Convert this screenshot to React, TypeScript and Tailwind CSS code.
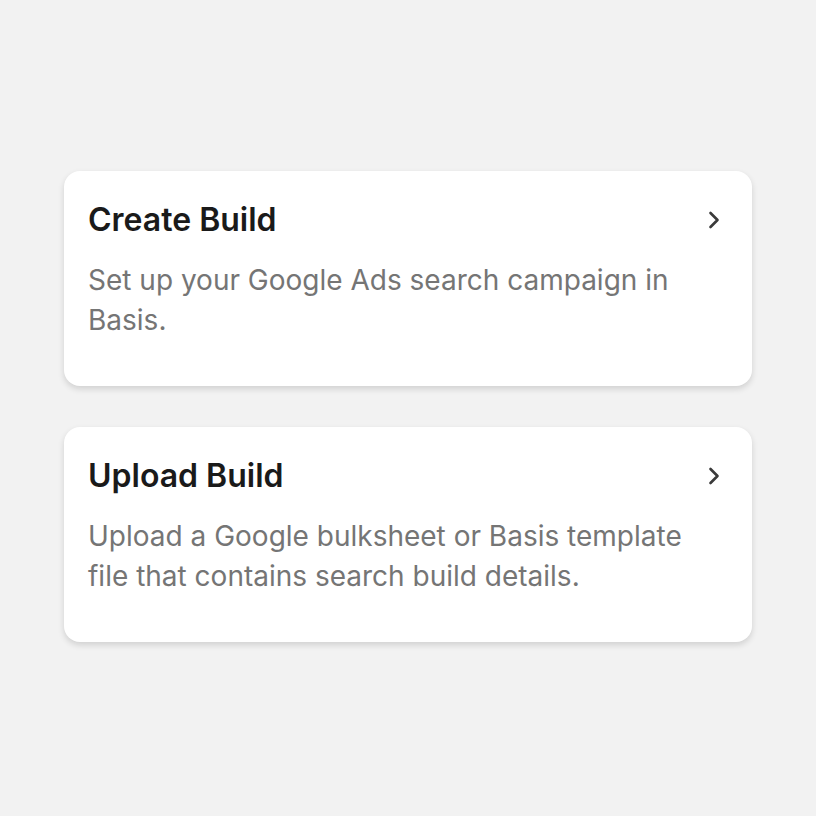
import { ChevronRight } from "lucide-react";

const builds = [
  { title: "Create Build", text: "Set up your Google Ads search campaign in Basis." },
  { title: "Upload Build", text: "Upload a Google bulksheet or Basis template file that contains search build details." },
];

function BuildCard({ title, text }: { title: string; text: string }) {
  return (
    <button
      type="button"
      className="w-full rounded-2xl bg-white px-6 pt-[29px] pb-[46px] text-left shadow-[0_3px_6px_rgba(0,0,0,0.14)]"
    >
      <div className="flex items-center justify-between">
        <h2 className="text-[32px] leading-[40px] font-semibold text-[#1a1a1a]">{title}</h2>
        <ChevronRight className="h-7 w-7 text-[#3a3a3a]" strokeWidth={2.25} />
      </div>
      <p className="mt-[20px] pr-10 text-[28px] leading-[40px] text-[#757575]">{text}</p>
    </button>
  );
}

export default function App() {
  return (
    <div
      className="flex min-h-screen w-full flex-col gap-[41px] bg-[#f2f2f2] px-16 pt-[171px]"
      style={{ fontFamily: "Inter, 'Noto Sans', sans-serif" }}
    >
      {builds.map((b) => (
        <BuildCard key={b.title} title={b.title} text={b.text} />
      ))}
    </div>
  );
}
